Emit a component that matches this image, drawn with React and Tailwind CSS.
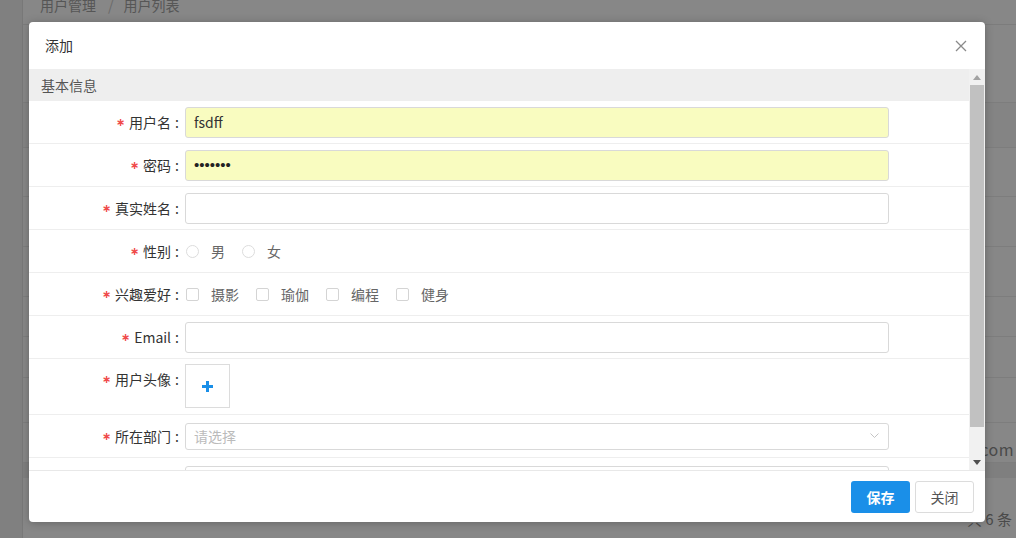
import React from "react";

const font = "font-['Microsoft_YaHei','Noto_Sans_CJK_SC',sans-serif]";

function Label({ children, top }) {
  return (
    <div
      className={`w-[150px] shrink-0 flex items-center justify-end text-[14px] text-[#333] leading-[31px] ${top ? "self-start" : ""}`}
    >
      <span className="text-[#f04b4b] text-[11px] mr-[4px] font-['DejaVu_Sans',sans-serif] font-bold">∗</span>
      <span>{children}</span>
      <span className="ml-[4px]">:</span>
    </div>
  );
}

function Row({ children, h = "h-[43px]", top }) {
  return (
    <div className={`flex ${top ? "items-start pt-[5px]" : "items-center"} ${h} border-b border-[#eeeeee] shrink-0`}>
      {children}
    </div>
  );
}

function Radio({ label }) {
  return (
    <div className="flex items-center mr-[17px]">
      <span className="w-[13px] h-[13px] rounded-full border border-[#dcdcdc] bg-white" />
      <span className="ml-[12px] text-[14px] text-[#666]">{label}</span>
    </div>
  );
}

function Check({ label }) {
  return (
    <div className="flex items-center mr-[17px]">
      <span className="w-[13px] h-[13px] rounded-[2px] border border-[#d4d4d4] bg-white" />
      <span className="ml-[12px] text-[14px] text-[#666]">{label}</span>
    </div>
  );
}

export default function App() {
  return (
    <div className={`relative w-[1016px] h-[538px] overflow-hidden bg-white ${font}`}>
      {/* underlying page */}
      <div className="flex h-full">
        <div className="w-[23px] shrink-0 bg-[#f1f1f1] border-r border-[#e2e2e2]" />
        <div className="flex-1 flex flex-col">
          <div className="h-[25px] shrink-0 border-b border-[#eaeaea] pl-[17px] flex items-start text-[14px] text-[#a3a3a3] leading-[11px]">
            <span>用户管理</span>
            <span className="ml-[12px] mr-[10px] text-[#c8c8c8]">/</span>
            <span>用户列表</span>
          </div>
          <div className="h-[78px] shrink-0 border-b border-[#ececec]" />
          <div className="h-[45px] shrink-0 border-b border-[#ececec] bg-[#fafafa]" />
          <div className="h-[49px] shrink-0 border-b border-[#ececec]" />
          <div className="h-[50px] shrink-0 border-b border-[#ececec]" />
          <div className="h-[50px] shrink-0 border-b border-[#ececec]" />
          <div className="h-[40px] shrink-0 border-b border-[#ececec]" />
          <div className="h-[41px] shrink-0 border-b border-[#ececec]" />
          <div className="h-[45px] shrink-0 border-b border-[#ececec]" />
          <div className="h-[40px] shrink-0 border-b border-[#ececec] flex items-end justify-end pr-[2px] pb-[1px] text-[16px] tracking-[0.5px] text-[#8c8c8c]">
            test@qq.com
          </div>
          <div className="h-[15px] shrink-0 bg-[#f0f0f0]" />
          <div className="flex-1 flex items-end justify-end pr-[4px] pb-[8px] text-[15px] text-[#8c8c8c]">
            共 6 条
          </div>
        </div>
      </div>

      {/* mask */}
      <div className="absolute inset-0 bg-black/[0.47]" />

      {/* dialog */}
      <div className="absolute left-[29px] top-[22px] w-[956px] h-[500px] bg-white rounded-[4px] shadow-[0_1px_8px_rgba(0,0,0,0.25)] flex flex-col overflow-hidden">
        <div className="h-[47px] shrink-0 flex items-center justify-between pl-[16px] pr-[18px]">
          <span className="text-[14px] text-[#333]">添加</span>
          <svg width="12" height="12" viewBox="0 0 12 12">
            <path d="M1 1 L11 11 M11 1 L1 11" stroke="#8a8a8a" strokeWidth="1.3" fill="none" />
          </svg>
        </div>

        <div className="h-[401px] shrink-0 flex">
          <div className="flex-1 flex flex-col overflow-hidden">
            <div className="h-[32px] shrink-0 bg-[#eeeeee] flex items-center pl-[12px] text-[14px] text-[#555]">
              基本信息
            </div>
            <Row>
              <Label>用户名</Label>
              <div className="ml-[6px] w-[704px] h-[31px] rounded-[3px] border border-[#d9d9d9] bg-[#f9fcc0] flex items-center pl-[8px] text-[14px] text-[#333]">
                fsdff
              </div>
            </Row>
            <Row>
              <Label>密码</Label>
              <div className="ml-[6px] w-[704px] h-[31px] rounded-[3px] border border-[#d9d9d9] bg-[#f9fcc0] flex items-center pl-[8px] text-[15px] text-[#222] font-['Liberation_Sans',sans-serif]">
                •••••••
              </div>
            </Row>
            <Row>
              <Label>真实姓名</Label>
              <div className="ml-[6px] w-[704px] h-[31px] rounded-[3px] border border-[#d9d9d9] bg-white" />
            </Row>
            <Row>
              <Label>性别</Label>
              <div className="ml-[7px] flex items-center">
                <Radio label="男" />
                <Radio label="女" />
              </div>
            </Row>
            <Row>
              <Label>兴趣爱好</Label>
              <div className="ml-[7px] flex items-center">
                <Check label="摄影" />
                <Check label="瑜伽" />
                <Check label="编程" />
                <Check label="健身" />
              </div>
            </Row>
            <Row>
              <Label>Email</Label>
              <div className="ml-[6px] w-[704px] h-[31px] rounded-[3px] border border-[#d9d9d9] bg-white" />
            </Row>
            <Row h="h-[56px]" top>
              <Label top>用户头像</Label>
              <div className="ml-[6px] w-[45px] h-[44px] border border-[#dcdcdc] bg-white flex items-center justify-center">
                <svg width="11" height="11" viewBox="0 0 11 11">
                  <rect x="4" y="0" width="3" height="11" fill="#1a8fe8" />
                  <rect x="0" y="4" width="11" height="3" fill="#1a8fe8" />
                </svg>
              </div>
            </Row>
            <Row>
              <Label>所在部门</Label>
              <div className="ml-[6px] w-[704px] h-[27px] rounded-[3px] border border-[#d9d9d9] bg-white flex items-center justify-between pl-[8px] pr-[9px]">
                <span className="text-[14px] text-[#bbbbbb]">请选择</span>
                <svg width="9" height="6" viewBox="0 0 9 6">
                  <path d="M0.5 0.5 L4.5 4.5 L8.5 0.5" stroke="#c4c4c4" strokeWidth="1" fill="none" />
                </svg>
              </div>
            </Row>
            <Row>
              <div className="w-[150px] shrink-0" />
              <div className="ml-[6px] w-[704px] h-[27px] rounded-[3px] border border-[#d9d9d9] bg-white" />
            </Row>
          </div>

          {/* scrollbar */}
          <div className="w-[16px] shrink-0 bg-[#f1f1f1] flex flex-col">
            <div className="h-[16px] flex items-center justify-center">
              <svg width="8" height="5" viewBox="0 0 8 5">
                <path d="M0 5 L4 0 L8 5 Z" fill="#a3a3a3" />
              </svg>
            </div>
            <div className="h-[342px] mx-[1px] bg-[#c1c1c1]" />
            <div className="flex-1" />
            <div className="h-[16px] flex items-center justify-center">
              <svg width="8" height="5" viewBox="0 0 8 5">
                <path d="M0 0 L8 0 L4 5 Z" fill="#505050" />
              </svg>
            </div>
          </div>
        </div>

        <div className="flex-1 border-t border-[#e8e8e8] flex items-start justify-end pt-[10px] pr-[11px] gap-[5px]">
          <div className="w-[59px] h-[32px] rounded-[3px] bg-[#1a8fe8] text-white text-[14px] font-bold flex items-center justify-center">
            保存
          </div>
          <div className="w-[59px] h-[32px] rounded-[3px] bg-white border border-[#dcdcdc] text-[#555] text-[14px] flex items-center justify-center">
            关闭
          </div>
        </div>
      </div>
    </div>
  );
}
